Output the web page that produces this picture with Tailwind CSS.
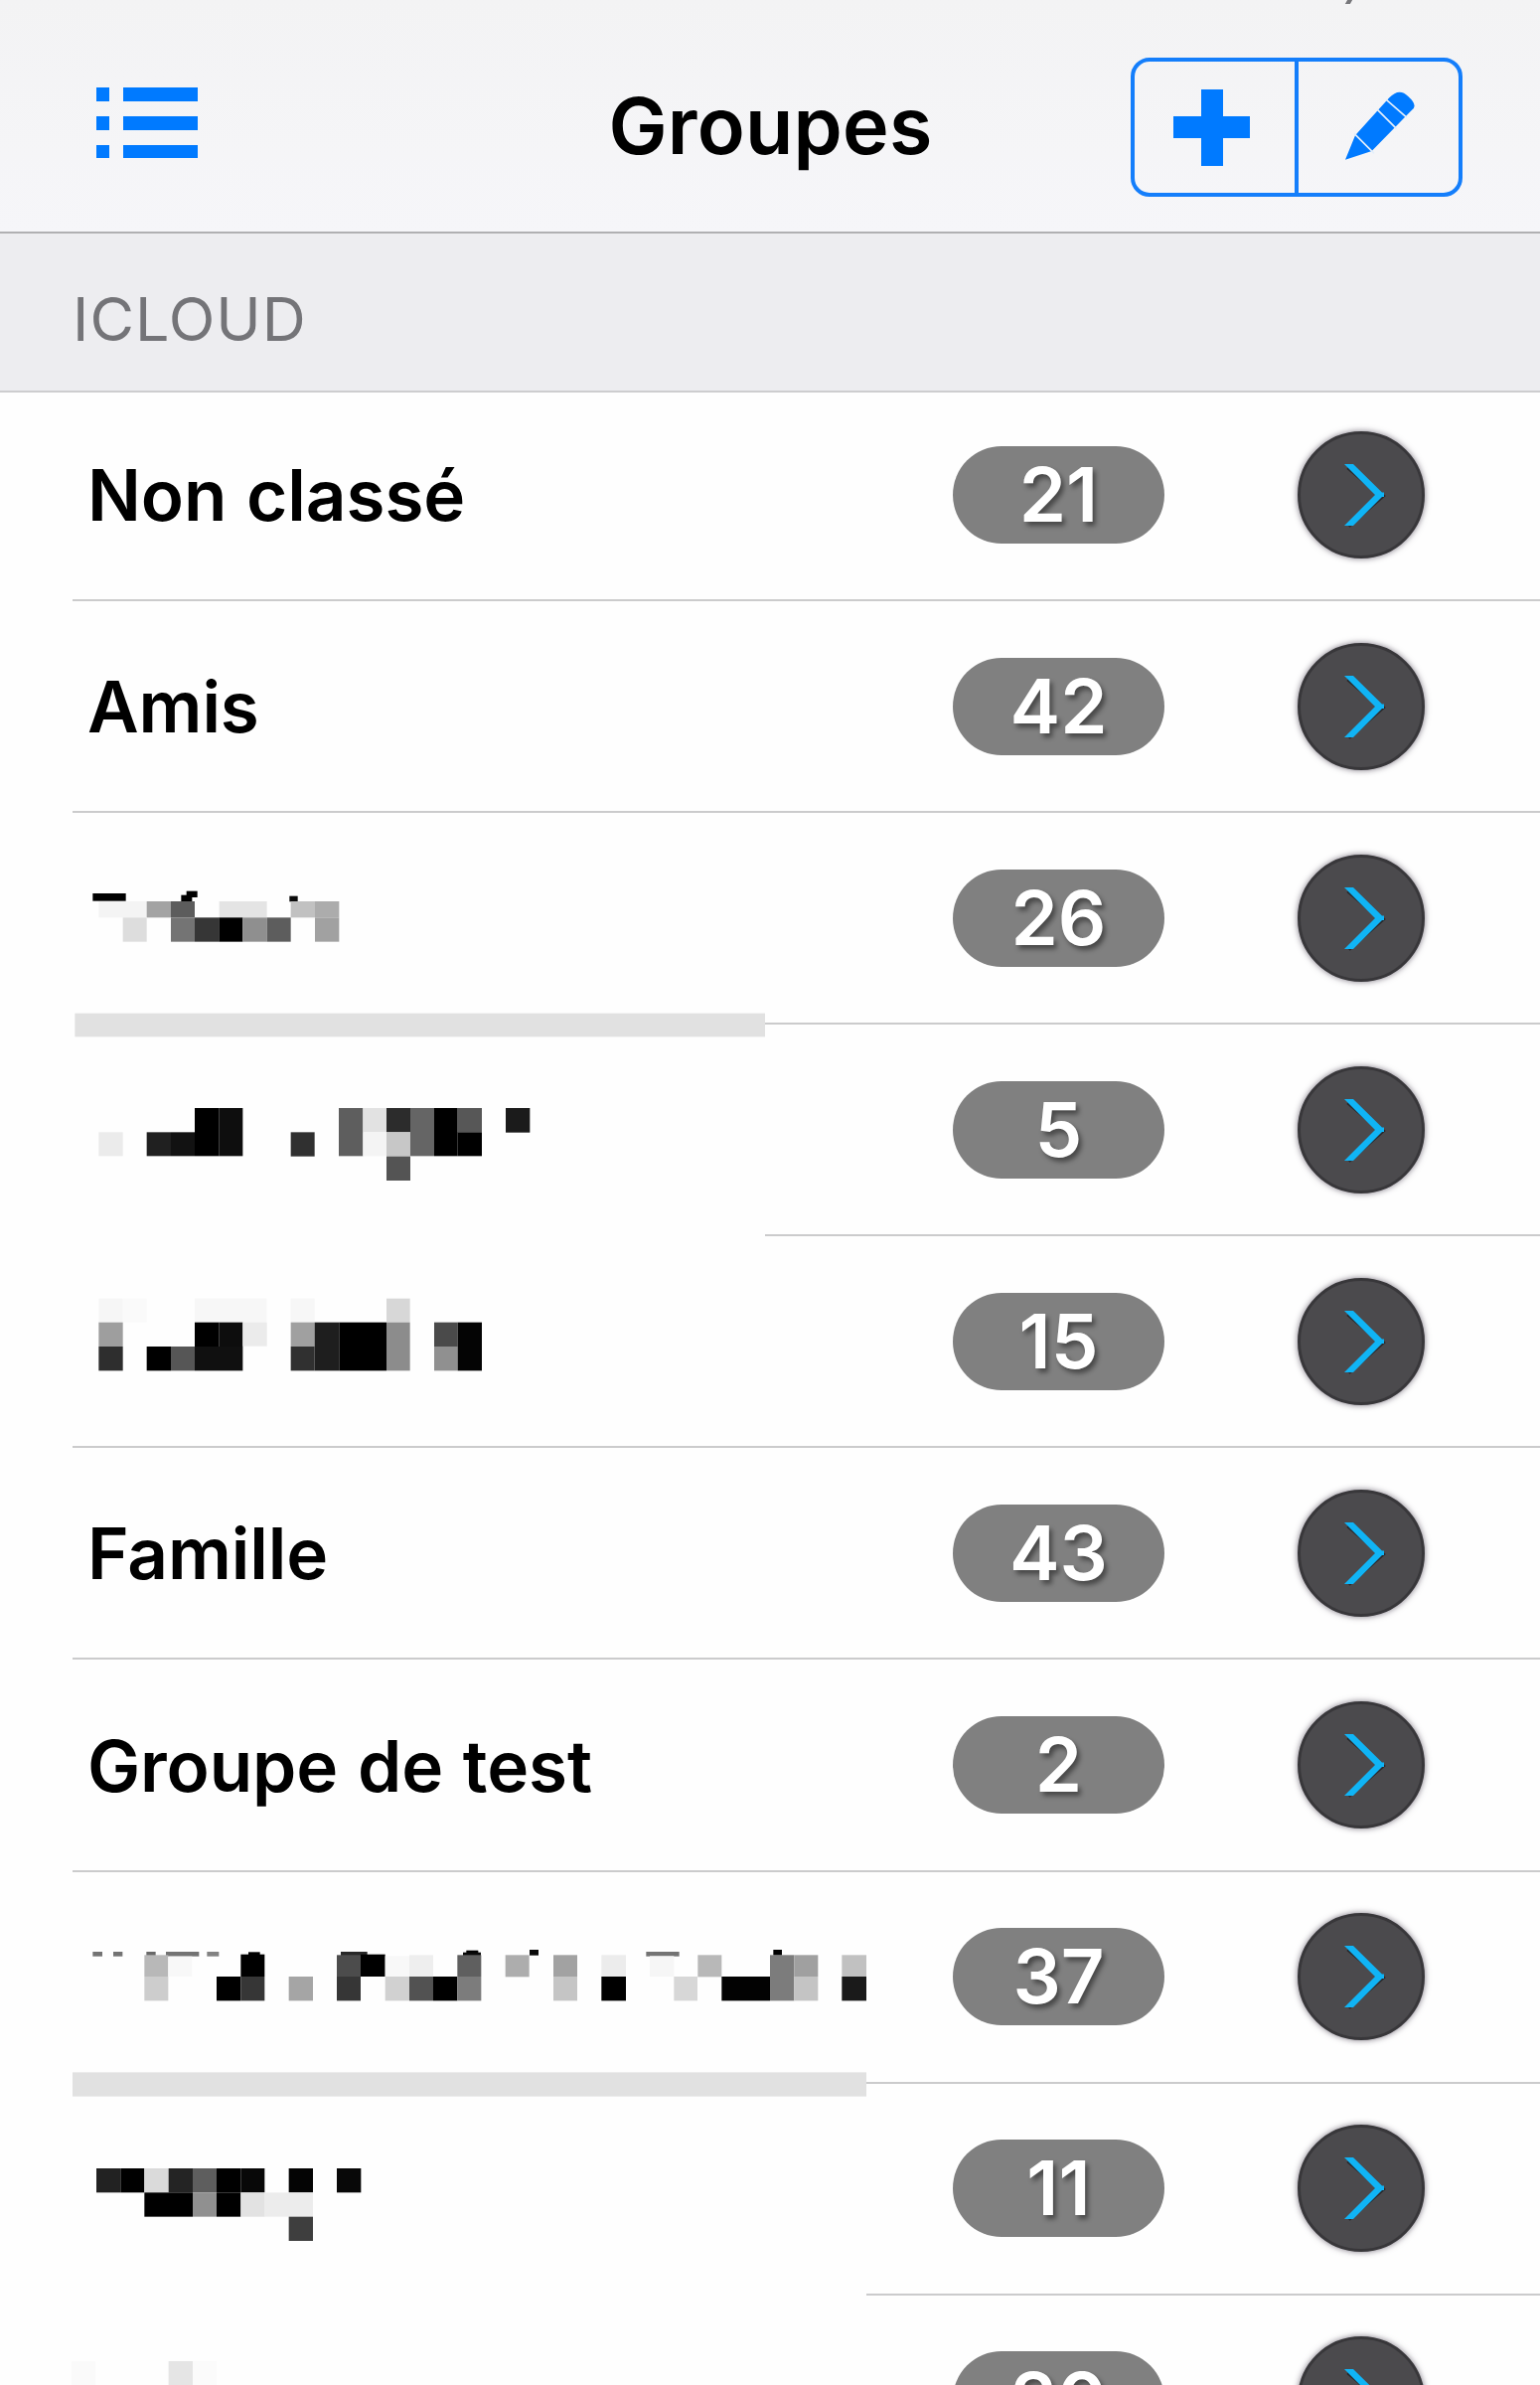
<!DOCTYPE html>
<html lang="fr">
<head>
    <meta charset="UTF-8">
    <meta name="viewport" content="width=device-width, initial-scale=1.0">
    <title>Groupes</title>
    <script src="https://cdn.jsdelivr.net/npm/@tailwindcss/browser@4"></script>
</head>
<body class="bg-[#fefefe]">
    <div class="relative w-[1550px] h-[2400px] overflow-hidden font-['Inter','Liberation_Sans',sans-serif] text-black">
        <header class="h-[235px] border-b-2 border-[#b0b0b2] bg-linear-to-b from-[#f3f3f4] to-[#f6f6f9] grid grid-cols-[1fr_auto_1fr] items-center pl-24 pr-[78px] pt-[22px]">
            <button class="w-[104px] h-[72px] -mt-[8px]">
                <svg width="104" height="72" viewBox="0 0 104 72" fill="#007aff">
                    <path d="M1 0h13v14H1zM28 0h75v14H28zM1 29h13v14H1zM28 29h75v14H28zM1 58h13v13H1zM28 58h75v13H28z" />
                </svg>
            </button>
            <h1 id="title" class="text-[79px] leading-none font-semibold tracking-[0.2px] -mt-[3px] -ml-[17px]">Groupes</h1>
            <div class="justify-self-end flex w-[334px] h-[140px] border-[4.5px] border-[#147efb] rounded-[19px]">
                <button class="w-[165px] border-r-[4.5px] border-[#147efb]">
                    <svg class="ml-[39px] mt-px" width="77" height="77" viewBox="0 0 77 77" fill="#007aff">
                        <path d="M28 0h22v27h27v22H50v28H28V49H0V27h28z" />
                    </svg>
                </button>
                <button class="flex-1">
                    <svg class="ml-[46px] -mt-[3px]" width="72" height="70" viewBox="762 272 216 210">
                        <path fill="#007aff" d="M765 481L795 408L898 294Q928 262 955 290Q986 318 966 331L845 455Z" />
                        <path stroke="#e4effb" stroke-width="5" d="M889 300l62 54M862 330l58 58M792 402l60 60" />
                    </svg>
                </button>
            </div>
        </header>
        <div class="h-[160px] border-b-2 border-[#cdcdcf] bg-[#ededf0] pl-[73px] pt-[56px]">
            <h2 class="text-[61px] leading-[60px] text-[#747478] tracking-[1px]">ICLOUD</h2>
        </div>
        <ul id="groups"></ul>
        <!-- masked names, laid over the list -->
        <svg id="masks" class="absolute left-0 top-0" width="1550" height="2400" viewBox="0 0 1550 2400"></svg>
        <div class="absolute left-[1355px] top-0 w-[5px] h-[4px] bg-[#77777b] -skew-x-[30deg]"></div>
    </div>

    <script>
        const groups = [
            { name: 'Non classé', count: 21 },
            { name: 'Amis', count: 42 },
            { name: '', count: 26 },
            { name: '', count: 5 },
            { name: '', count: 15 },
            { name: 'Famille', count: 43 },
            { name: 'Groupe de test', count: 2 },
            { name: '', count: 37 },
            { name: '', count: 11 },
            { name: '', count: 20 }
        ];

        document.getElementById('groups').innerHTML = groups.map((group, i) => `
            <li class="pl-[73px] ${i === 0 ? 'h-[210px]' : 'h-[213.1px]'}">
                <div class="h-full border-b-2 border-[#cbcbcc] flex items-center pr-[115px] ${i === 0 ? 'pb-[3px]' : ''}">
                    <span class="flex-1 pl-[15px] pt-[2px] whitespace-nowrap text-[71px] leading-none font-semibold tracking-[-0.1px] [word-spacing:2px]">${group.name}</span>
                    <span class="w-[213px] h-[98px] rounded-full bg-[#808080] text-white text-[76px] leading-[97px] font-semibold text-center [text-shadow:3px_4px_5px_rgba(0,0,0,0.45)]">${group.count}</span>
                    <svg class="ml-[133px] drop-shadow-[0_0_3px_rgba(40,30,50,0.6)]" width="130" height="130" viewBox="0 0 130 130">
                        <circle cx="65" cy="65" r="62.5" fill="#4b4a4d" stroke="#38373a" stroke-width="3" />
                        <path d="M52 37L86 66L52 96" fill="none" stroke="#29292c" stroke-width="5" />
                        <path d="M48 34H57L86 62.500H88V67H86L57 96H48L79 65Z" fill="#10b4f5" />
                    </svg>
                </div>
            </li>`).join('');

        // x, y, width, height, gray level; in thirds of a pixel from the origin of each mask
        const masks = [
            { x: 60, y: 870, cells: [
                [100, 87, 100, 23, 0], [367, 92, 33, 20, 0], [383, 80, 33, 19, 0], [694, 95, 25, 17, 10],
                [118, 111, 145, 49, 244], [263, 111, 73, 49, 163], [336, 111, 72, 49, 92], [482, 111, 144, 49, 228], [698, 111, 73, 49, 193], [771, 111, 73, 49, 172],
                [191, 160, 72, 73, 221], [336, 160, 72, 73, 116], [408, 160, 73, 73, 54], [481, 160, 72, 73, 0], [553, 160, 73, 73, 143], [626, 160, 72, 73, 93], [771, 160, 73, 73, 161],
                [46, 449, 2084, 71, 225]
            ] },
            { x: 60, y: 1080, cells: [
                [118, 178, 73, 72, 235], [263, 178, 73, 72, 32], [336, 178, 72, 72, 18], [408, 105, 73, 145, 0], [481, 105, 72, 145, 14], [698, 178, 72, 73, 48],
                [843, 105, 73, 145, 94], [916, 105, 71, 73, 226], [916, 178, 71, 72, 244], [987, 105, 72, 73, 44], [987, 178, 72, 73, 199], [987, 251, 72, 73, 84],
                [1059, 105, 72, 145, 101], [1131, 105, 71, 145, 0], [1202, 105, 73, 73, 87], [1202, 178, 73, 72, 0], [1347, 105, 73, 74, 27]
            ] },
            { x: 60, y: 1280, cells: [
                [118, 80, 73, 72, 246], [191, 80, 72, 72, 250], [408, 80, 217, 72, 247], [698, 80, 72, 72, 247], [987, 80, 71, 72, 215],
                [118, 152, 73, 73, 158], [118, 225, 73, 73, 46], [263, 225, 73, 73, 0], [336, 225, 72, 73, 86], [408, 152, 73, 73, 0], [481, 152, 72, 73, 13], [408, 225, 145, 73, 16], [553, 152, 73, 72, 235],
                [698, 152, 72, 73, 160], [698, 225, 72, 73, 48], [770, 152, 74, 146, 30], [844, 152, 143, 146, 0], [987, 152, 71, 146, 140],
                [1131, 152, 71, 73, 74], [1131, 225, 71, 73, 144], [1202, 152, 73, 146, 4]
            ] },
            { x: 60, y: 1940, cells: [
                [100, 72, 29, 14, 115], [162, 72, 28, 14, 115], [262, 72, 28, 14, 105], [321, 72, 100, 14, 115], [445, 72, 36, 14, 130], [570, 73, 35, 12, 0], [849, 72, 80, 14, 40], [1228, 68, 36, 18, 0], [1218, 74, 54, 12, 10],
                [256, 82, 72, 65, 184], [328, 86, 72, 61, 248], [547, 80, 72, 67, 0], [837, 82, 72, 65, 76], [909, 80, 74, 67, 0], [983, 85, 73, 62, 248], [1056, 82, 72, 65, 238], [1201, 82, 72, 65, 95],
                [256, 147, 72, 73, 205], [474, 147, 73, 73, 0], [547, 147, 72, 73, 54], [692, 147, 73, 73, 165], [837, 147, 72, 73, 54], [983, 147, 73, 73, 209], [1056, 147, 72, 73, 82], [1128, 147, 73, 73, 0], [1201, 147, 72, 73, 124],
                [39, 436, 2397, 73, 225]
            ] },
            { x: 470, y: 1940, cells: [
                [189, 66, 27, 17, 10], [541, 72, 100, 14, 115], [925, 66, 26, 17, 0],
                [116, 82, 72, 66, 173], [261, 82, 72, 65, 162], [406, 82, 74, 65, 236], [552, 85, 73, 62, 246], [697, 82, 72, 66, 184], [915, 82, 73, 65, 124], [988, 82, 72, 65, 160], [1132, 82, 74, 65, 193],
                [261, 147, 72, 73, 197], [406, 147, 74, 73, 0], [625, 147, 71, 73, 215], [769, 147, 146, 73, 2], [915, 147, 73, 73, 124], [988, 147, 72, 73, 196], [1132, 147, 74, 73, 26]
            ] },
            { x: 60, y: 2150, cells: [
                [111, 96, 73, 73, 34], [184, 96, 72, 73, 0], [256, 96, 73, 73, 218], [329, 96, 73, 73, 36], [402, 96, 72, 73, 94], [474, 96, 73, 73, 0], [547, 96, 72, 73, 8], [692, 96, 73, 73, 4], [837, 96, 73, 73, 8],
                [256, 169, 146, 73, 0], [402, 169, 72, 73, 144], [474, 169, 73, 73, 0], [547, 169, 73, 73, 226], [620, 169, 145, 73, 236], [692, 242, 73, 73, 62],
                [36, 678, 72, 72, 250], [329, 678, 73, 72, 229], [402, 678, 72, 72, 251]
            ] }
        ];

        // the separators around the masked rows are covered too
        const covers = '<path fill="#fefefe" d="M73 1025h4v10H73zM73 1238h697v10H73zM73 2304h799v10H73z" />';

        document.getElementById('masks').innerHTML = covers + masks.map(mask => `
            <g transform="translate(${mask.x} ${mask.y}) scale(0.33333)">
                ${mask.cells.map(([x, y, w, h, v]) => `<rect x="${x}" y="${y}" width="${w}" height="${h}" fill="rgb(${v},${v},${v})" />`).join('')}
            </g>`).join('');
    </script>
</body>
</html>
